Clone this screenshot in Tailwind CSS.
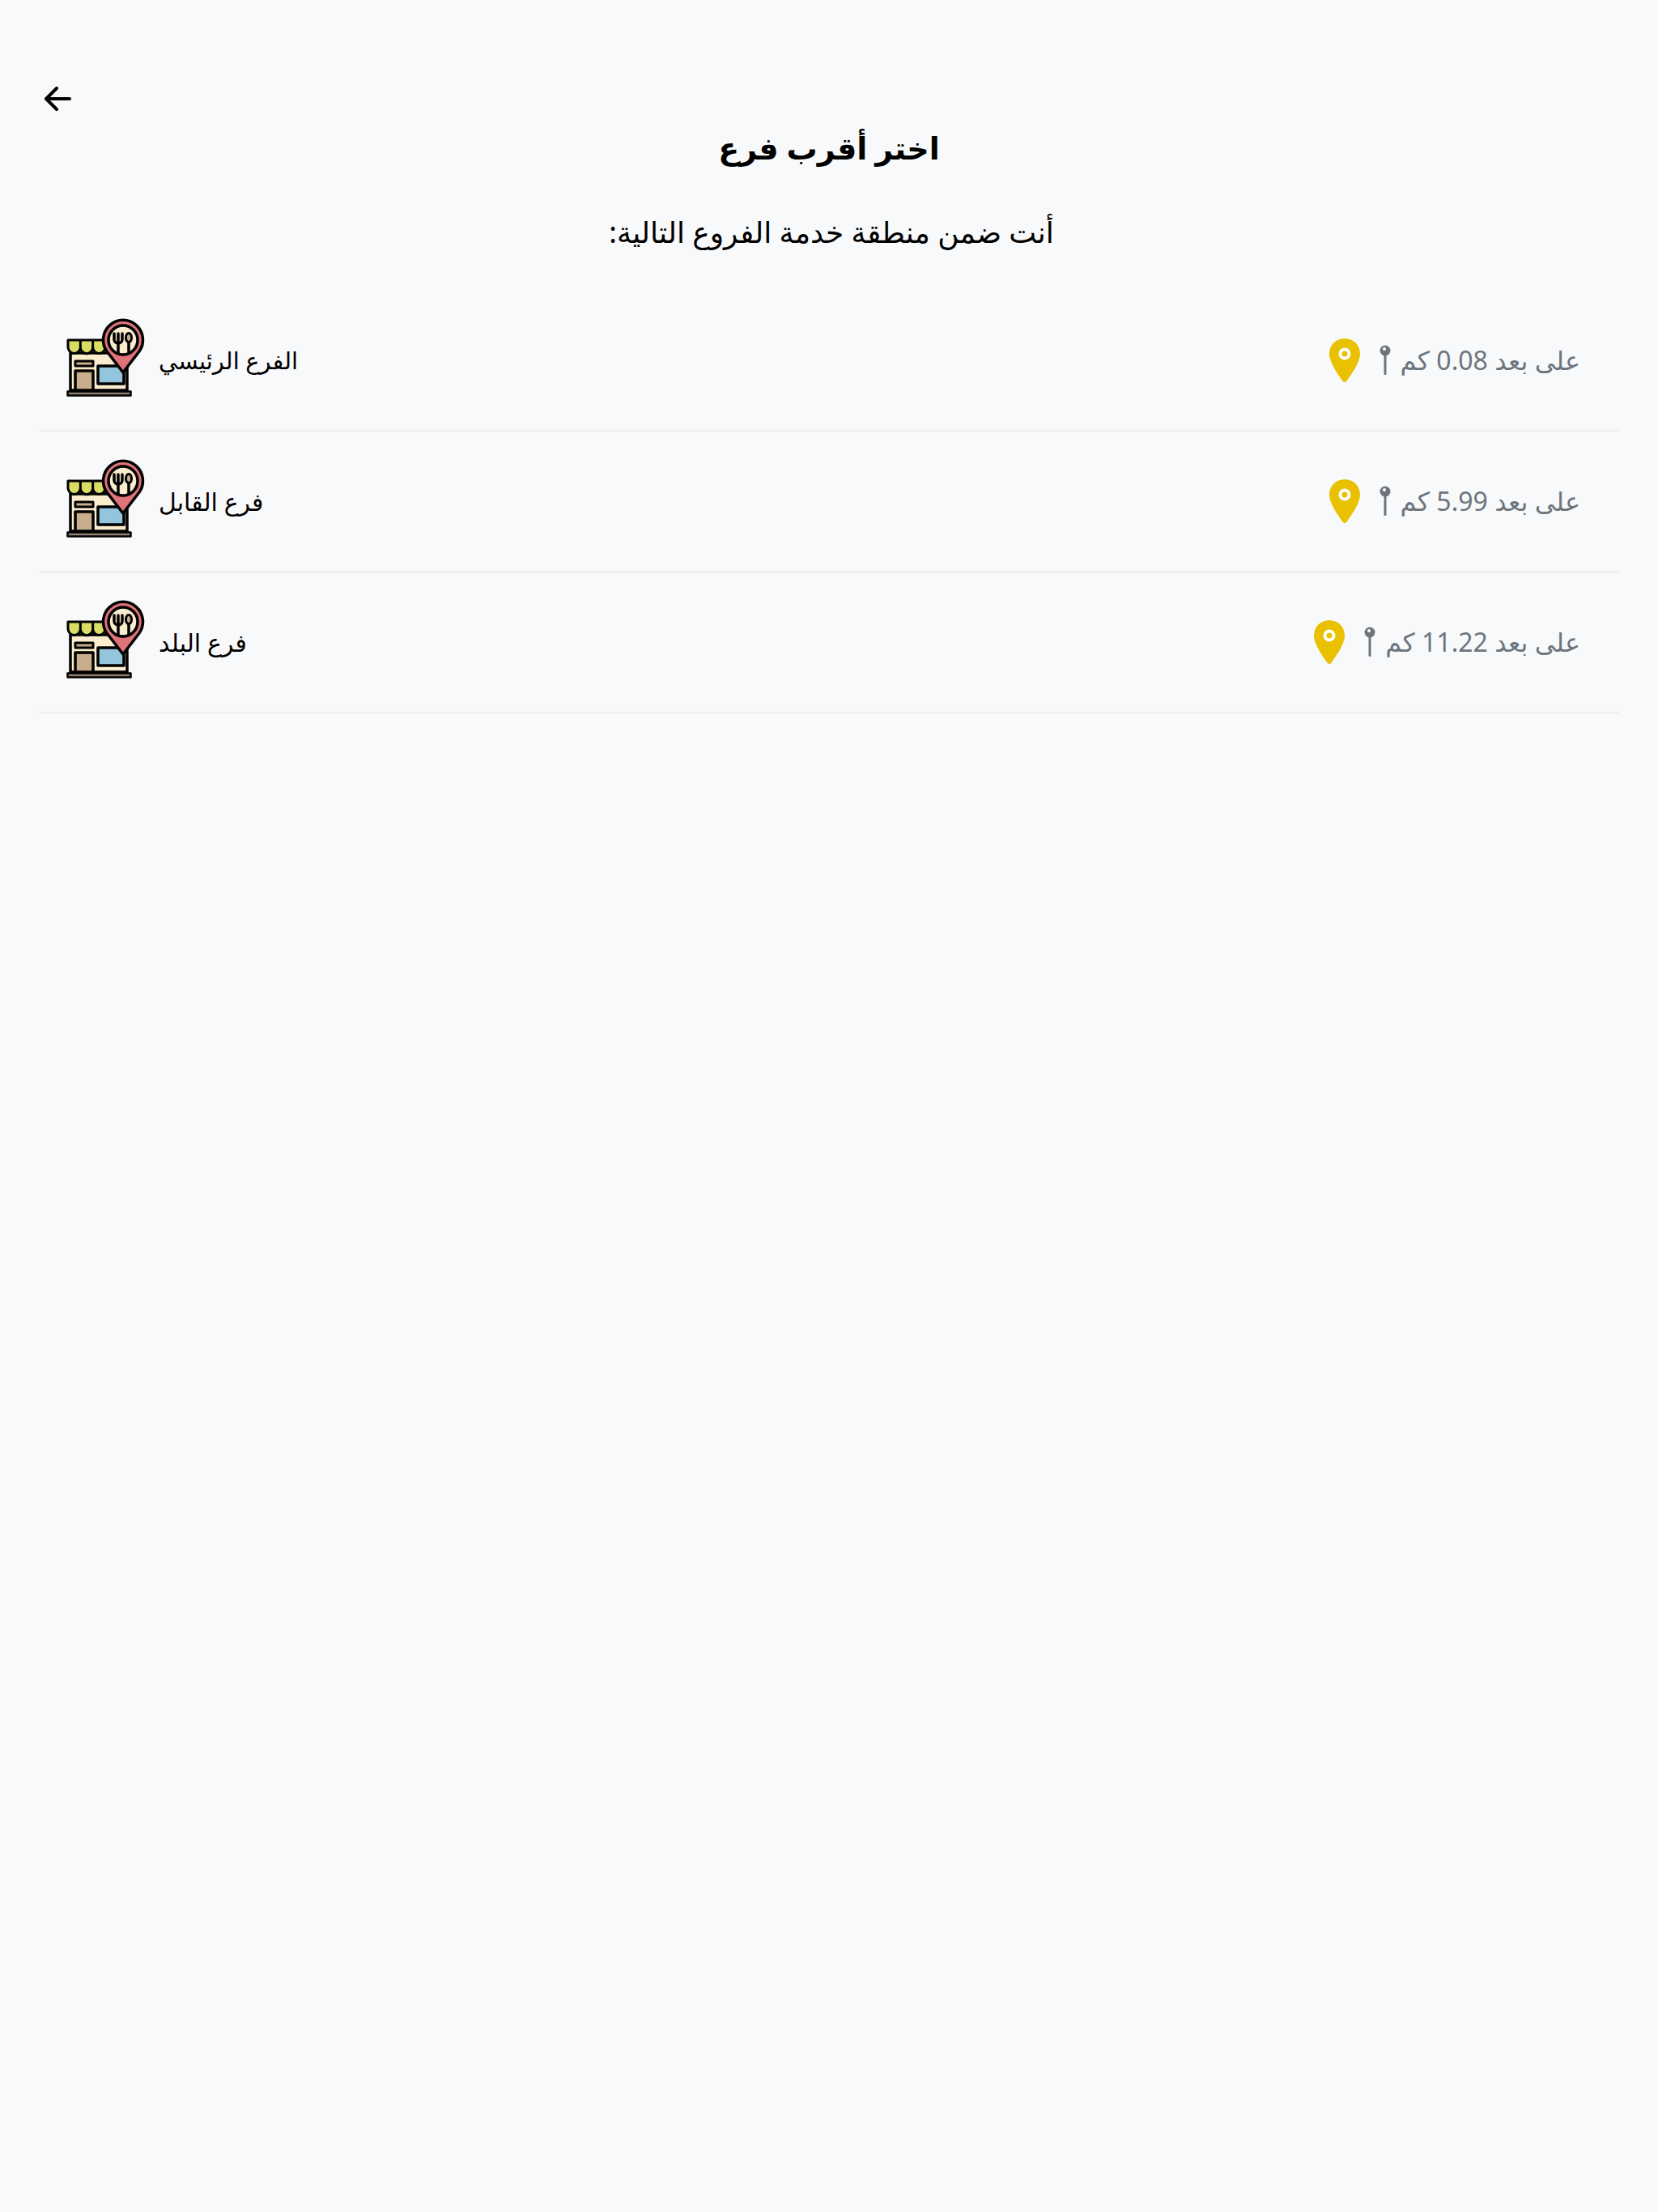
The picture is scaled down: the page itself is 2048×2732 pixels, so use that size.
<!DOCTYPE html>
<html lang="ar">
<head>
    <meta charset="UTF-8">
    <title>اختر أقرب فرع</title>
    <script src="https://cdn.jsdelivr.net/npm/@tailwindcss/browser@4"></script>
</head>
<body class="bg-[#f8f9fb] text-black min-h-[2732px] font-['Noto_Sans','DejaVu_Sans',sans-serif]">
<svg width="0" height="0" class="absolute">
    <symbol id="store" viewBox="0 0 100 100">
        <g stroke="#000" stroke-width="3.500" stroke-linejoin="round">
            <rect x="7" y="44" width="70" height="46" fill="#fbeccd"/>
            <rect x="13" y="66" width="22" height="24" fill="#c9ae8c"/>
            <rect x="13" y="54" width="22" height="6" fill="#c9ae8c" stroke-width="3"/>
            <rect x="41" y="60" width="32" height="22" fill="#93c5dc"/>
            <path d="M4 28h46v9a7.670 7.670 0 0 1-15.330 0 7.670 7.670 0 0 1-15.340 0 7.670 7.670 0 0 1-15.330 0zM19.330 28v9M34.670 28v9" fill="#d9de62" stroke-width="3"/>
            <rect x="3.500" y="91.500" width="78" height="5" fill="#8f7f70" stroke-width="2.500"/>
            <path d="M72 68 52 42a24.500 24.500 0 1 1 40 0z" fill="#e0737a"/>
            <circle cx="72" cy="28" r="18" fill="#fbeccd"/>
            <path d="M61 20v7a5 5 0 0 0 10 0v-7M66 20v24M79 31v13" fill="none" stroke-width="3.500" stroke-linecap="round"/>
            <ellipse cx="79" cy="25" rx="3.500" ry="5.500" fill="#c9ae8c" stroke-width="3"/>
        </g>
    </symbol>
    <symbol id="pin-yellow" viewBox="0 0 38 54">
        <path d="M19 0C8 0 0 8.500 0 19c0 11 12 27 16 33 1.500 2.500 4.500 2.500 6 0 4-6 16-22 16-33C38 8.500 30 0 19 0z" fill="#e9c100"/>
        <circle cx="19" cy="19" r="5.500" fill="none" stroke="#fff" stroke-width="4"/>
    </symbol>
    <symbol id="pin-small" viewBox="0 0 14 38">
        <circle cx="7" cy="7" r="6.500" fill="#6c757d"/>
        <rect x="5.500" y="10" width="3" height="27" rx="1.500" fill="#6c757d"/>
        <circle cx="6" cy="5" r="2" fill="#fff"/>
    </symbol>
</svg>
<div class="px-12 pt-[92px]">
    <button class="block ml-[7px] w-[33px] h-[60px]">
        <svg width="33" height="30" viewBox="0 0 33 30" fill="none" stroke="#000" stroke-width="4" stroke-linecap="round" stroke-linejoin="round">
            <path d="M31 15H2M15 2 2 15l13 13"/>
        </svg>
    </button>
    <h1 class="text-center text-[38px] leading-[60px] font-semibold" dir="rtl">اختر أقرب فرع</h1>
    <p class="text-center text-[36px] leading-[50px] mt-[50px] pl-[6px]" dir="rtl">أنت ضمن منطقة خدمة الفروع التالية:</p>

    <div class="mt-[47px]">
        <!-- branch rows -->
        <div class="flex items-center justify-between h-[174px] border-b-2 border-[#eceef0] pl-8 pr-12">
            <div class="flex items-center gap-4">
                <svg width="100" height="100" class="-mt-[6px]"><use href="#store"/></svg>
                <span class="text-[29px]" dir="rtl">الفرع الرئيسي</span>
            </div>
            <div class="flex items-center gap-6 text-[#6c757d]">
                <svg width="38" height="54"><use href="#pin-yellow"/></svg>
                <div class="flex items-center gap-3">
                    <svg width="14" height="38"><use href="#pin-small"/></svg>
                    <span class="text-[32px]" dir="rtl">على بعد 0.08 كم</span>
                </div>
            </div>
        </div>
        <div class="flex items-center justify-between h-[174px] border-b-2 border-[#eceef0] pl-8 pr-12">
            <div class="flex items-center gap-4">
                <svg width="100" height="100" class="-mt-[6px]"><use href="#store"/></svg>
                <span class="text-[30px]" dir="rtl">فرع القابل</span>
            </div>
            <div class="flex items-center gap-6 text-[#6c757d]">
                <svg width="38" height="54"><use href="#pin-yellow"/></svg>
                <div class="flex items-center gap-3">
                    <svg width="14" height="38"><use href="#pin-small"/></svg>
                    <span class="text-[32px]" dir="rtl">على بعد 5.99 كم</span>
                </div>
            </div>
        </div>
        <div class="flex items-center justify-between h-[174px] border-b-2 border-[#eceef0] pl-8 pr-12">
            <div class="flex items-center gap-4">
                <svg width="100" height="100" class="-mt-[6px]"><use href="#store"/></svg>
                <span class="text-[30px]" dir="rtl">فرع البلد</span>
            </div>
            <div class="flex items-center gap-6 text-[#6c757d]">
                <svg width="38" height="54"><use href="#pin-yellow"/></svg>
                <div class="flex items-center gap-3">
                    <svg width="14" height="38"><use href="#pin-small"/></svg>
                    <span class="text-[32px]" dir="rtl">على بعد 11.22 كم</span>
                </div>
            </div>
        </div>
    </div>
</div>
</body>
</html>
